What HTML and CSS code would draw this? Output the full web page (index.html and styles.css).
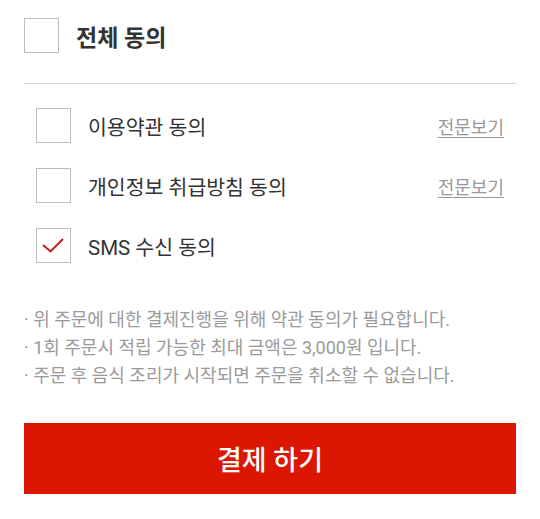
FILE: index.html
```html
<!DOCTYPE html>
<html lang="ko">
<head>
<meta charset="utf-8">
<link rel="stylesheet" href="styles.css">
</head>
<body>
<div class="page">
  <label class="all-row">
    <span class="box"></span>
    <span class="all-label">전체 동의</span>
  </label>
  <div class="divider"></div>
  <ul class="terms">
    <li class="term">
      <span class="box"></span>
      <span class="term-label">이용약관 동의</span>
      <a class="more" href="#">전문보기</a>
    </li>
    <li class="term">
      <span class="box"></span>
      <span class="term-label">개인정보 취급방침 동의</span>
      <a class="more" href="#">전문보기</a>
    </li>
    <li class="term">
      <span class="box checked">
        <svg viewBox="0 0 35 35" width="35" height="35"><path d="M7 17 L14.5 23.5 L27 11" fill="none" stroke="#c8191b" stroke-width="2"/></svg>
      </span>
      <span class="term-label">SMS 수신 동의</span>
    </li>
  </ul>
  <ul class="notes">
    <li>· 위 주문에 대한 결제진행을 위해 약관 동의가 필요합니다.</li>
    <li>· 1회 주문시 적립 가능한 최대 금액은 3,000원 입니다.</li>
    <li>· 주문 후 음식 조리가 시작되면 주문을 취소할 수 없습니다.</li>
  </ul>
  <button class="pay">결제 하기</button>
</div>
</body>
</html>
```
FILE: styles.css
```css
* { box-sizing: border-box; }
html, body { margin: 0; padding: 0; background: #fff; }
body { font-family: Roboto, "Noto Sans CJK KR", sans-serif; color: #333; }
.page { padding: 18px 24px 0 24px; }
.box {
  position: relative;
  width: 35px; height: 35px;
  border: 1px solid #bdbdbd;
  background: #fff;
  flex: none;
  display: block;
}
.box svg { position: absolute; left: -1px; top: -1px; display: block; }
.all-row { display: flex; align-items: center; height: 35px; }
.all-label { margin-left: 17px; font-size: 23px; font-weight: bold; color: #333; }
.divider { height: 1px; background: #d6d6d6; margin-top: 30px; }
.terms { list-style: none; margin: 24px 0 0 0; padding: 0 12px; }
.term { display: flex; align-items: center; height: 35px; margin-bottom: 25px; }
.term-label { margin-left: 17px; font-size: 20.5px; color: #333; flex: 1; }
.more { font-size: 18px; color: #999; text-decoration: underline; text-underline-offset: 3px; }
.notes { list-style: none; margin: 43px 0 0 0; padding: 0; font-size: 18px; color: #9a9a9a; line-height: 28px; }
.pay {
  display: block; width: 100%; height: 71px; margin-top: 33px;
  background: #dc1600; color: #fff; border: 0;
  font-family: inherit; font-size: 27px; font-weight: 500;
}
```
